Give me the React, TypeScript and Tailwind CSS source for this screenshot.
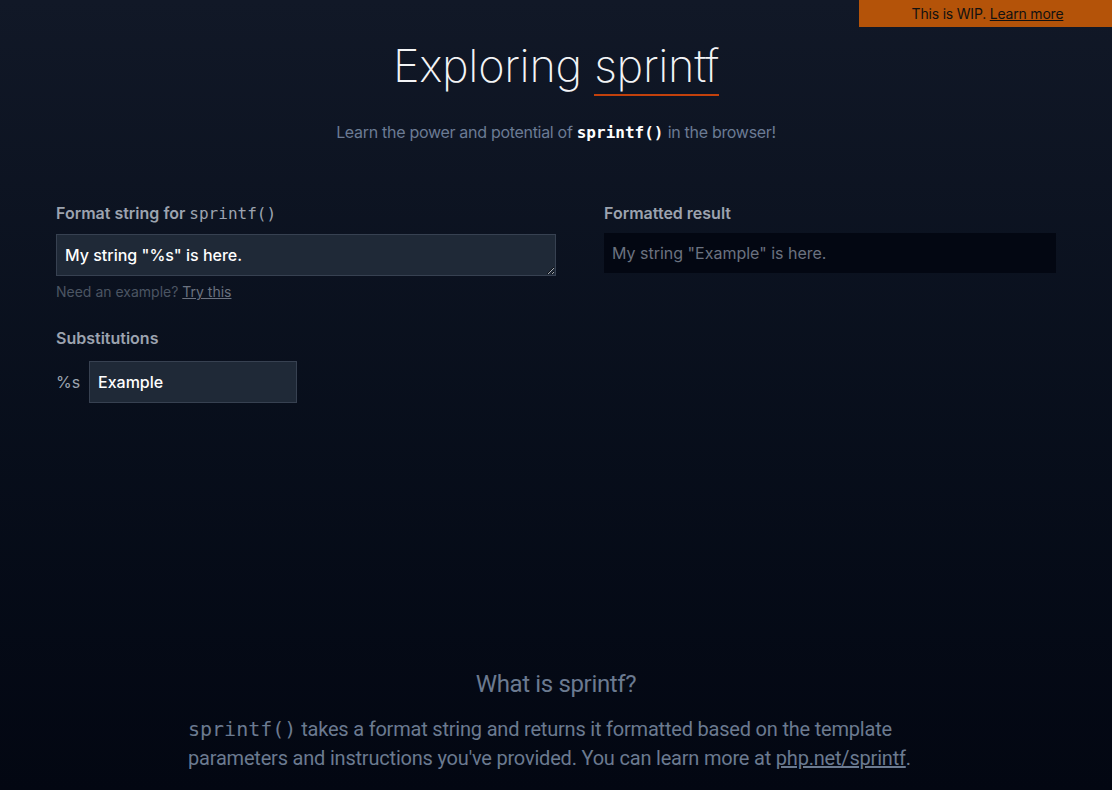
import React from "react";

export default function App() {
  return (
    <div
      className="min-h-[790px] w-full bg-gradient-to-b from-[#111827] to-[#030712] text-white relative"
      style={{ fontFamily: "Inter, 'Noto Sans', sans-serif" }}
    >
      <div className="absolute top-0 right-0 w-[253px] h-[27px] bg-[#b45309] text-[#111] text-[14px] flex items-center justify-center tracking-[-0.2px]">
        <span className="pl-[4px]">
          This is WIP. <a className="underline" href="#">Learn more</a>
        </span>
      </div>

      <div className="pt-[36px] flex flex-col items-center">
        <h1 className="text-[45px] font-extralight leading-[60px] text-[#f3f4f6] tracking-[-0.3px]">
          Exploring{" "}
          <span className="inline-block border-b-2 border-[#c2410c] leading-[56px]">sprintf</span>
        </h1>
        <p className="mt-[24px] text-[16px] text-[#6b7b94] tracking-[-0.3px]">
          Learn the power and potential of{" "}
          <code className="font-bold text-white tracking-normal" style={{ fontFamily: "'DejaVu Sans Mono', monospace" }}>
            sprintf()
          </code>{" "}
          in the browser!
        </p>
      </div>

      <div className="mx-[56px] mt-[56px] grid grid-cols-[500px_1fr] gap-12">
        <div>
          <label className="block text-[16px] font-semibold text-[#9ca3af] leading-6">
            Format string for{" "}
            <code className="font-normal" style={{ fontFamily: "'DejaVu Sans Mono', monospace" }}>
              sprintf()
            </code>
          </label>
          <textarea
            className="mt-[8px] block w-[500px] h-[42px] bg-[#1f2937] border border-[#374151] px-[8px] py-[8px] text-[16px] font-medium text-white leading-6 resize-y outline-none"
            defaultValue={'My string "%s" is here.'}
            rows={1}
          />
          <p className="mt-[5px] text-[14px] text-[#4b5563]">
            Need an example?{" "}
            <a className="underline text-[#6b7280]" href="#">
              Try this
            </a>
          </p>

          <h2 className="mt-[24px] text-[16px] font-semibold text-[#9ca3af] leading-6">Substitutions</h2>
          <div className="mt-[11px] flex items-center gap-[9px]">
            <span className="text-[16px] text-[#9ca3af] w-6">%s</span>
            <input
              className="w-[208px] h-[42px] bg-[#1f2937] border border-[#374151] px-[8px] text-[16px] font-medium text-white outline-none"
              defaultValue="Example"
            />
          </div>
        </div>

        <div>
          <h2 className="text-[16px] font-semibold text-[#9ca3af] leading-6">Formatted result</h2>
          <div className="mt-[8px] h-[40px] bg-[#030712] px-[8px] flex items-center text-[16px] text-[#6b7280]">
            My string "Example" is here.
          </div>
        </div>
      </div>

      <div className="mt-[265px] mx-auto max-w-3xl px-4 pb-4" style={{ fontFamily: "Roboto, 'Noto Sans', sans-serif" }}>
        <h2 className="text-center text-[24px] text-[#6b7a90] leading-8 tracking-[-0.35px]">What is sprintf?</h2>
        <p className="mt-[15px] text-[20px] leading-[29px] text-[#6b7a90] tracking-[-0.2px]">
          <code className="tracking-normal" style={{ fontFamily: "'DejaVu Sans Mono', monospace" }}>sprintf()</code> takes a format string and
          returns it formatted based on the template parameters and instructions you've provided. You can learn more
          at{" "}
          <a className="underline" href="#">
            php.net/sprintf
          </a>
          .
        </p>
      </div>
    </div>
  );
}
